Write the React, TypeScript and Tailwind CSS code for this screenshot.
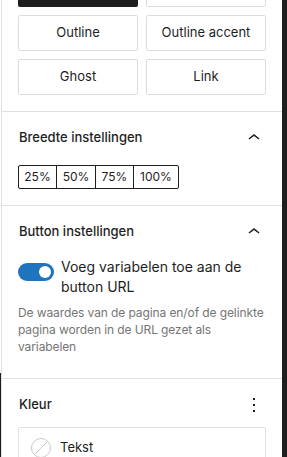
import React from "react";

const font = { fontFamily: "Inter, 'Noto Sans', sans-serif" };

function ChevronUp() {
  return (
    <svg width="24" height="24" viewBox="0 0 24 24" fill="#1e1e1e">
      <path d="M6.5 12.4L12 8l5.5 4.4-.9 1.2L12 10l-4.6 3.6-.9-1.2z" />
    </svg>
  );
}

function MoreVertical() {
  return (
    <svg width="24" height="24" viewBox="0 0 24 24" fill="#1e1e1e">
      <path d="M13 19h-2v-2h2v2zm0-6h-2v-2h2v2zm0-6h-2V5h2v2z" />
    </svg>
  );
}

function PanelHeader({ title, icon }: { title: string; icon: React.ReactNode }) {
  return (
    <div className="flex h-[48px] items-center justify-between pl-[17px] pr-[16px] pt-[3px]">
      <span className="text-[13px] font-medium text-[#1e1e1e]">{title}</span>
      {icon}
    </div>
  );
}

function StyleButton({ label, dark }: { label?: string; dark?: boolean }) {
  return (
    <div
      className={
        dark
          ? "flex h-[36px] items-center justify-center rounded-[2px] bg-[#1e1e1e] text-[13px] text-white"
          : "flex h-[36px] items-center justify-center rounded-[2px] border border-[#dcdcde] bg-white text-[13px] text-[#1e1e1e]"
      }
    >
      {label}
    </div>
  );
}

export default function App() {
  return (
    <div className="flex h-[457px] w-[287px] overflow-hidden bg-[#1e1e1e]" style={font}>
      <div className="flex w-[1px] flex-col">
        <div className="h-[373px] bg-white" />
        <div className="flex-1 bg-[#1e1e1e]" />
      </div>
      <div className="flex w-[281px] flex-col border-l border-[#e0e0e0] bg-white">
        {/* Styles */}
        <div className="border-b border-[#e0e0e0] px-[16px] pb-[16px]">
          <div className="mt-[-29px] grid grid-cols-2 gap-[8px]">
            <StyleButton dark />
            <StyleButton />
            <StyleButton label="Outline" />
            <StyleButton label="Outline accent" />
            <StyleButton label="Ghost" />
            <StyleButton label="Link" />
          </div>
        </div>

        {/* Breedte */}
        <div className="border-b border-[#e0e0e0] pb-[16px]">
          <PanelHeader title="Breedte instellingen" icon={<ChevronUp />} />
          <div className="mt-[5px] px-[16px]">
            <div className="flex h-[24px] w-fit rounded-[2px] border border-[#1e1e1e] text-[12px] text-[#1e1e1e]">
              <div className="flex w-[38px] items-center justify-center border-r border-[#1e1e1e]">25%</div>
              <div className="flex w-[39px] items-center justify-center border-r border-[#1e1e1e]">50%</div>
              <div className="flex w-[38px] items-center justify-center border-r border-[#1e1e1e]">75%</div>
              <div className="flex w-[44px] items-center justify-center">100%</div>
            </div>
          </div>
        </div>

        {/* Button instellingen */}
        <div className="border-b border-[#e0e0e0] pb-[23px]">
          <PanelHeader title="Button instellingen" icon={<ChevronUp />} />
          <div className="mt-[3px] flex items-start gap-[7px] px-[16px]">
            <div className="mt-[6px] flex h-[18px] w-[36px] shrink-0 items-center justify-end rounded-full bg-[#1f74bd] pr-[3px]">
              <div className="h-[12px] w-[12px] rounded-full bg-white" />
            </div>
            <span className="text-[14px] leading-[20px] text-[#1e1e1e]">
              Voeg variabelen toe aan de button URL
            </span>
          </div>
          <p className="mt-[7px] pl-[16px] pr-[10px] text-[12px] leading-[17px] tracking-[-0.1px] text-[#757575]">
            De waardes van de pagina en/of de gelinkte
            <br />
            pagina worden in de URL gezet als
            <br />
            variabelen
          </p>
        </div>

        {/* Kleur */}
        <div>
          <PanelHeader title="Kleur" icon={<MoreVertical />} />
          <div className="mx-[16px] rounded-[2px] border border-[#e0e0e0]">
            <div className="flex h-[40px] items-center gap-[9px] px-[12px]">
              <svg width="20" height="20" viewBox="0 0 20 20">
                <circle cx="10" cy="10" r="9.5" fill="white" stroke="#c9c9c9" />
                <line x1="3.5" y1="16.5" x2="16.5" y2="3.5" stroke="#c9c9c9" strokeWidth="1" />
              </svg>
              <span className="text-[13px] text-[#1e1e1e]">Tekst</span>
            </div>
          </div>
        </div>
      </div>
      <div className="flex-1 bg-[#1e1e1e]" />
    </div>
  );
}
